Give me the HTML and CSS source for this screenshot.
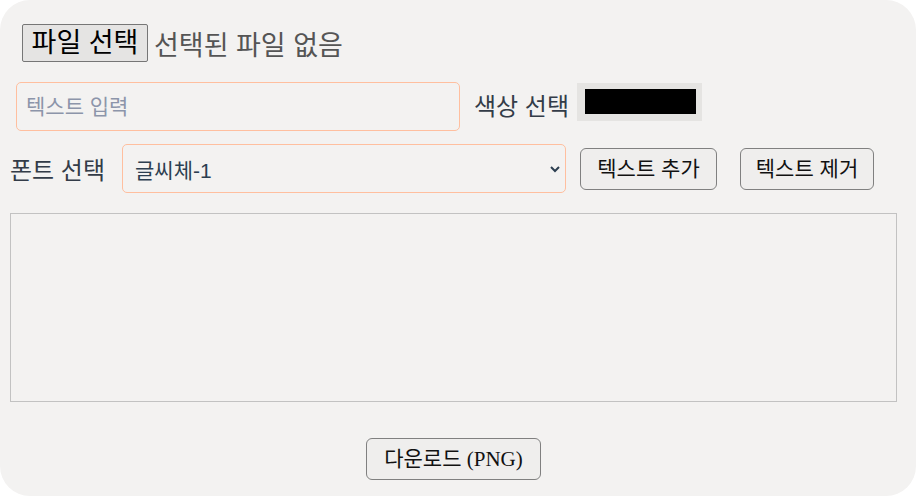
FILE: index.html
```html
<!DOCTYPE html>
<html lang="ko">
<head>
  <meta charset="UTF-8">
  <meta name="viewport" content="width=device-width, initial-scale=1.0">
  <title>텍스트 편집기</title>
  <link rel="stylesheet" href="styles.css">
</head>
<body>
  <div class="editor">
    <div class="file-row">
      <button class="file-button">파일 선택</button>
      <span class="file-name">선택된 파일 없음</span>
    </div>

    <div class="text-row">
      <input type="text" class="text-input" placeholder="텍스트 입력">
      <label class="label color-label">색상 선택</label>
      <div class="color-box"><div class="color-swatch"></div></div>
    </div>

    <div class="font-row">
      <label class="label">폰트 선택</label>
      <div class="font-select">
        <span>글씨체-1</span>
        <svg width="12" height="8" viewBox="0 0 12 8"><path d="M2 2 L6 6 L10 2" fill="none" stroke="#2c3e50" stroke-width="2"/></svg>
      </div>
      <button class="action-button">텍스트 추가</button>
      <button class="action-button">텍스트 제거</button>
    </div>

    <div class="canvas-box"></div>

    <div class="download-row">
      <button class="download-button">다운로드 (PNG)</button>
    </div>
  </div>
</body>
</html>
```

FILE: styles.css
```css
body {
  margin: 0;
  padding: 0;
  background-color: #FFFFFF;
  font-family: "Liberation Sans", "Noto Sans CJK KR", sans-serif;
}

.editor {
  width: 916px;
  height: 496px;
  box-sizing: border-box;
  background-color: #f3f2f1;
  border-radius: 30px;
  padding: 24px 19px 0 10px;
}

.file-row {
  display: flex;
  align-items: center;
  margin-left: 12px;
  height: 38px;
}

.file-button {
  font-family: "Liberation Sans", "Noto Sans CJK KR", sans-serif;
  font-size: 27px;
  line-height: 1;
  height: 38px;
  width: 126px;
  padding: 0;
  background-color: #e5e4e3;
  border: 1px solid #767676;
  border-radius: 2px;
  color: #000;
}

.file-name {
  font-size: 27px;
  color: #555;
  margin-left: 6px;
}

.text-row {
  display: flex;
  align-items: center;
  margin-top: 20px;
  margin-left: 6px;
}

.text-input {
  width: 444px;
  height: 49px;
  box-sizing: border-box;
  border: 1px solid #ffbf9f;
  border-radius: 5px;
  background-color: #f3f2f1;
  padding: 0 9px;
  font-family: "Liberation Sans", "Noto Sans CJK KR", sans-serif;
  font-size: 21px;
}

.text-input::placeholder {
  color: #8c95aa;
}

.label {
  font-size: 24px;
  color: #333c48;
}

.color-label {
  margin-left: 14px;
  margin-right: 8px;
  margin-top: -4px;
}

.color-box {
  width: 125px;
  height: 38px;
  box-sizing: border-box;
  background-color: #e5e4e2;
  padding: 6px 6px 7px 8px;
  margin-top: -10px;
}

.color-swatch {
  width: 100%;
  height: 100%;
  background-color: #000;
}

.font-row {
  display: flex;
  align-items: center;
  margin-top: 13px;
}

.font-select {
  display: flex;
  align-items: center;
  justify-content: space-between;
  width: 444px;
  height: 49px;
  box-sizing: border-box;
  margin-left: 17px;
  border: 1px solid #ffbf9f;
  border-radius: 5px;
  padding: 0 4px 0 12px;
  font-size: 21px;
  color: #2c3e50;
}

.action-button {
  font-family: "Liberation Sans", "Noto Sans CJK KR", sans-serif;
  font-size: 21px;
  line-height: 1;
  height: 42px;
  width: 137px;
  margin-left: 14px;
  background-color: #efeeed;
  border: 1px solid #808080;
  border-radius: 6px;
  color: #111;
}

.action-button + .action-button {
  width: 134px;
  margin-left: 23px;
}

.canvas-box {
  height: 187px;
  margin-top: 20px;
  border: 1px solid #c2c2c2;
}

.download-row {
  display: flex;
  justify-content: center;
  margin-top: 36px;
}

.download-button {
  font-family: "Liberation Serif", "Noto Sans CJK KR", serif;
  font-size: 21px;
  line-height: 1;
  height: 42px;
  width: 175px;
  background-color: #efeeed;
  border: 1px solid #808080;
  border-radius: 6px;
  color: #111;
}
```
